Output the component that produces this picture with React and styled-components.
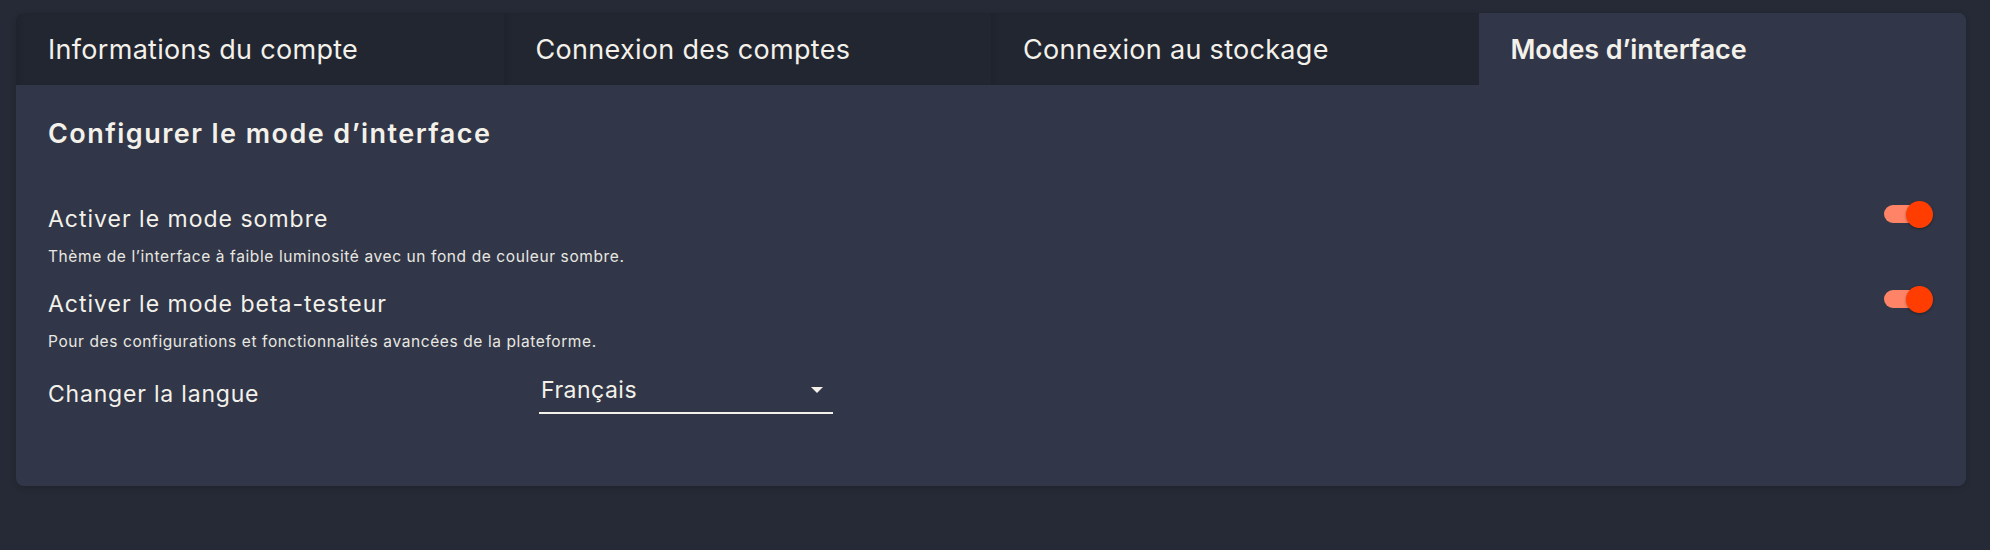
import React from 'react'
import styled, { createGlobalStyle } from 'styled-components'

const GlobalStyle = createGlobalStyle`
  html, body {
    margin: 0;
    padding: 0;
    background: #262a36;
  }
  body {
    font-family: "Inter", "Noto Sans", sans-serif;
    color: #f3f1ea;
  }
`

const Page = styled.div`
  width: 1990px;
  height: 550px;
  padding: 13px 24px 0 16px;
  box-sizing: border-box;
`

const Card = styled.div`
  background: #313748;
  border-radius: 8px;
  overflow: hidden;
  height: 473px;
  box-shadow: 0 2px 6px rgba(0, 0, 0, 0.15);
`

const TabBar = styled.div`
  display: grid;
  grid-template-columns: repeat(4, 1fr);
  height: 72px;
`

const Tab = styled.div`
  display: flex;
  align-items: center;
  padding-left: 32px;
  font-size: 27px;
  letter-spacing: ${p => (p.$active ? '-0.1px' : '0.3px')};
  font-weight: ${p => (p.$active ? 600 : 400)};
  background: ${p => (p.$active ? '#313748' : '#212631')};
  box-shadow: ${p => (p.$active ? 'none' : 'inset 6px 0 6px -4px rgba(0,0,0,0.12)')};
`

const Body = styled.div`
  padding: 33px 34px 0 32px;
`

const Heading = styled.h2`
  margin: 0 0 55px;
  font-size: 27px;
  line-height: 32px;
  font-weight: 600;
  letter-spacing: 1.45px;
`

const SettingRow = styled.div`
  display: flex;
  justify-content: space-between;
  align-items: flex-start;
  height: 85px;
`

const SettingText = styled.div`
  display: flex;
  flex-direction: column;
  gap: 14px;
`

const Label = styled.div`
  font-size: 23px;
  line-height: 28px;
  letter-spacing: 1px;
`

const Description = styled.div`
  font-size: 15.5px;
  line-height: 20px;
  letter-spacing: 0.6px;
  color: #e9e7e1;
`

const Switch = styled.span`
  position: relative;
  display: inline-block;
  width: 48px;
  height: 18px;
  border-radius: 9px;
  background: #ff8467;
`

const Thumb = styled.span`
  position: absolute;
  top: -4.5px;
  right: -1px;
  width: 27px;
  height: 27px;
  border-radius: 50%;
  background: #ff3d00;
  box-shadow: 0 1px 3px rgba(0, 0, 0, 0.35);
`

const LangRow = styled.div`
  display: flex;
  align-items: flex-start;
`

const LangLabel = styled(Label)`
  width: 491px;
  margin-top: 5px;
  letter-spacing: 0.8px;
`

const Select = styled.div`
  display: flex;
  align-items: center;
  justify-content: space-between;
  width: 294px;
  margin-top: 1px;
  box-sizing: border-box;
  padding: 0 10px 8px 2px;
  border-bottom: 2px solid #f3f1ea;
  font-size: 23px;
  line-height: 28px;
  letter-spacing: 0.5px;
`

const Caret = styled.span`
  width: 0;
  height: 0;
  border-left: 6px solid transparent;
  border-right: 6px solid transparent;
  border-top: 6px solid #f3f1ea;
`

function Toggle() {
  return (
    <Switch>
      <Thumb />
    </Switch>
  )
}

const tabs = [
  'Informations du compte',
  'Connexion des comptes',
  'Connexion au stockage',
  'Modes d’interface',
]

export default function App() {
  return (
    <Page>
      <GlobalStyle />
      <Card>
        <TabBar>
          {tabs.map((t, i) => (
            <Tab key={t} $active={i === 3}>{t}</Tab>
          ))}
        </TabBar>
        <Body>
          <Heading>Configurer le mode d’interface</Heading>
          <SettingRow>
            <SettingText>
              <Label>Activer le mode sombre</Label>
              <Description>Thème de l’interface à faible luminosité avec un fond de couleur sombre.</Description>
            </SettingText>
            <Toggle />
          </SettingRow>
          <SettingRow>
            <SettingText>
              <Label>Activer le mode beta-testeur</Label>
              <Description>Pour des configurations et fonctionnalités avancées de la plateforme.</Description>
            </SettingText>
            <Toggle />
          </SettingRow>
          <LangRow>
            <LangLabel>Changer la langue</LangLabel>
            <Select>
              <span>Français</span>
              <Caret />
            </Select>
          </LangRow>
        </Body>
      </Card>
    </Page>
  )
}
